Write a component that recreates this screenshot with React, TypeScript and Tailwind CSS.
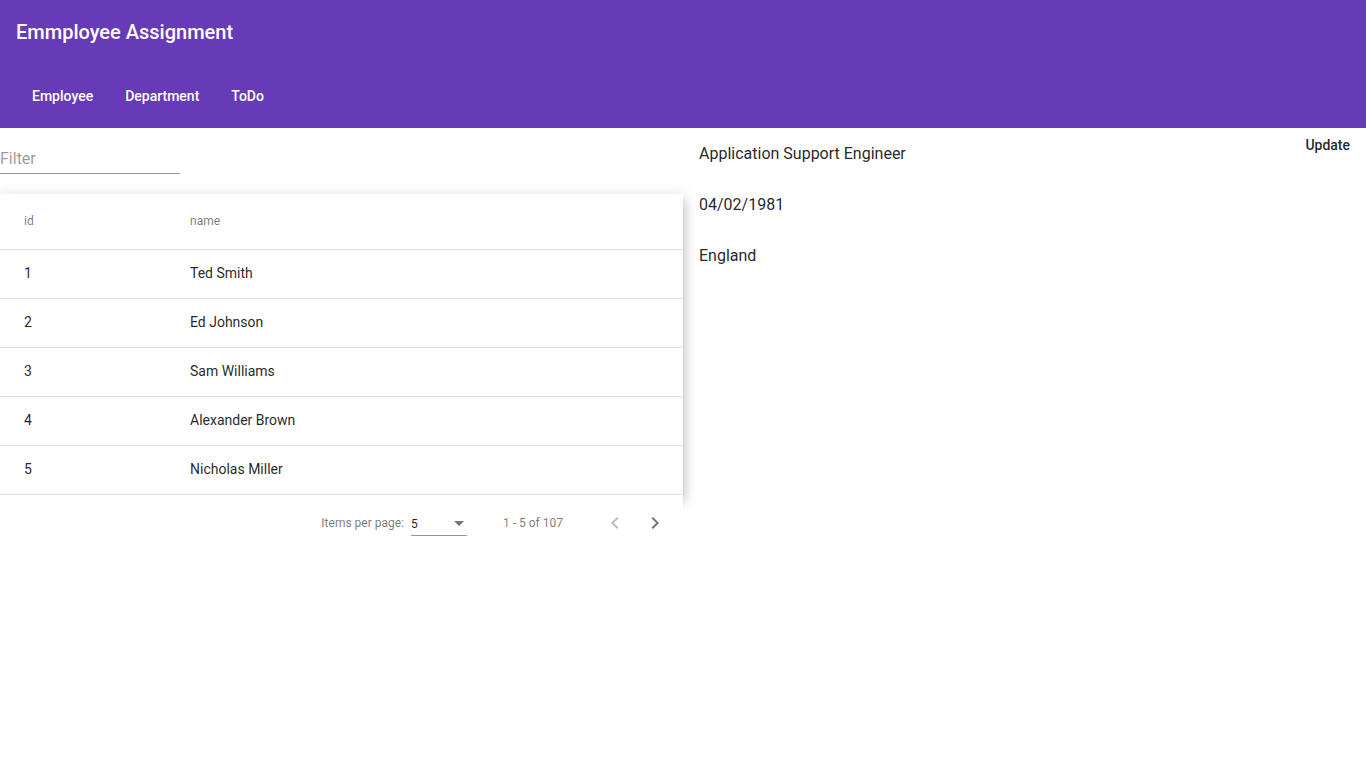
import React from "react";

const rows = [
  { id: 1, name: "Ted Smith" },
  { id: 2, name: "Ed Johnson" },
  { id: 3, name: "Sam Williams" },
  { id: 4, name: "Alexander Brown" },
  { id: 5, name: "Nicholas Miller" },
];

export default function App() {
  return (
    <div className="min-h-screen bg-white font-['Roboto',sans-serif]">
      <header className="bg-[#673ab7] text-white">
        <div className="h-16 flex items-center px-4">
          <span className="text-[20px] font-medium">Emmployee Assignment</span>
        </div>
        <nav className="h-16 flex items-center px-4">
          {["Employee", "Department", "ToDo"].map((l) => (
            <span key={l} className="px-4 text-[14px] font-medium leading-9">
              {l}
            </span>
          ))}
        </nav>
      </header>
      <div className="flex">
        <div className="w-[683px] shrink-0">
          <div className="w-[180px] pt-[15px] pb-[20px]">
            <div className="h-[31px] border-b border-[rgba(0,0,0,0.42)] flex items-center pt-[1px]">
              <span className="text-[16px] text-[rgba(0,0,0,0.42)]">Filter</span>
            </div>
          </div>
          <div className="bg-white shadow-[0_5px_5px_-3px_rgba(0,0,0,0.2),0_8px_10px_1px_rgba(0,0,0,0.14),0_3px_14px_2px_rgba(0,0,0,0.12)] relative">
            <div className="h-[56px] pb-[2px] flex items-center border-b border-[#e0e0e0] text-[12px] text-[rgba(0,0,0,0.54)] font-normal">
              <div className="w-[190px] pl-6">id</div>
              <div>name</div>
            </div>
            {rows.map((r) => (
              <div
                key={r.id}
                className="h-[49px] pb-[2px] flex items-center border-b border-[#e0e0e0] text-[14px] text-[rgba(0,0,0,0.87)]"
              >
                <div className="w-[190px] pl-6">{r.id}</div>
                <div>{r.name}</div>
              </div>
            ))}
          </div>
          <div className="h-[56px] flex items-center justify-end pr-2 text-[12px] text-[rgba(0,0,0,0.54)] bg-white relative">
            <span className="mr-[7px]">Items per page:</span>
            <div className="w-[56px] h-[26px] border-b border-[rgba(0,0,0,0.42)] flex items-center justify-between pt-[2px]">
              <span className="text-[12px] text-[rgba(0,0,0,0.87)]">5</span>
              <svg width="10" height="5" viewBox="0 0 10 5" className="mr-[3px]">
                <path d="M0 0L5 5L10 0z" fill="rgba(0,0,0,0.54)" />
              </svg>
            </div>
            <span className="ml-[36px] mr-[32px]">1 - 5 of 107</span>
            <div className="w-10 h-10 flex items-center justify-center">
              <svg width="24" height="24" viewBox="0 0 24 24">
                <path d="M15.41 7.41L14 6l-6 6 6 6 1.41-1.41L10.83 12z" fill="rgba(0,0,0,0.26)" />
              </svg>
            </div>
            <div className="w-10 h-10 flex items-center justify-center">
              <svg width="24" height="24" viewBox="0 0 24 24">
                <path d="M10 6L8.59 7.41 13.17 12l-4.58 4.59L10 18l6-6z" fill="rgba(0,0,0,0.54)" />
              </svg>
            </div>
          </div>
        </div>
        <div className="flex-1 flex justify-between items-start">
          <div className="pl-4 pt-[14px] flex flex-col gap-[27px] text-[16px] leading-6 text-[rgba(0,0,0,0.87)]">
            <div>Application Support Engineer</div>
            <div>04/02/1981</div>
            <div>England</div>
          </div>
          <button className="h-[34px] px-4 text-[14px] font-medium text-[rgba(0,0,0,0.87)]">Update</button>
        </div>
      </div>
    </div>
  );
}
